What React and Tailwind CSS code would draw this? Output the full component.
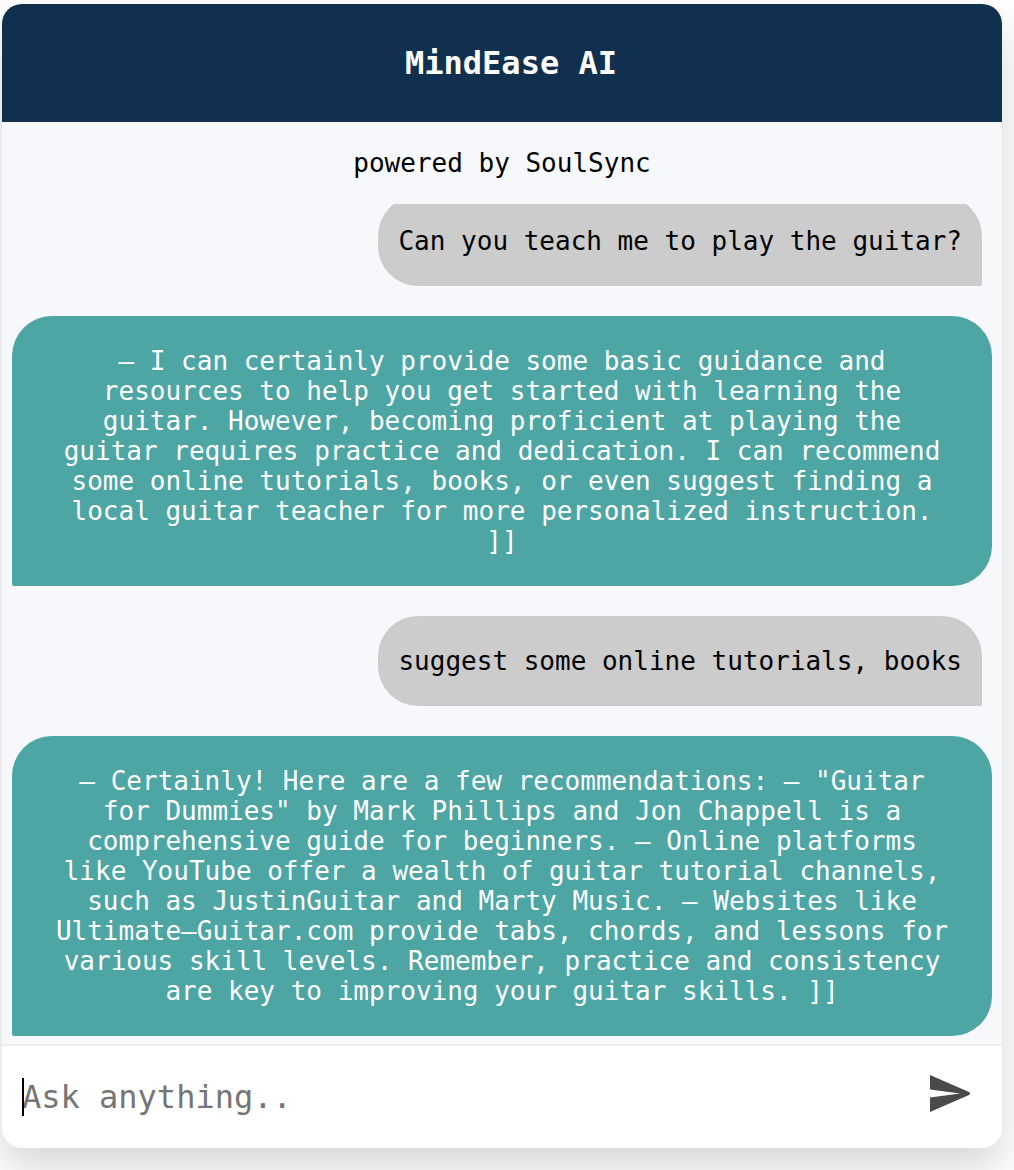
const messages = [
  { from: "user", text: "Can you teach me to play the guitar?" },
  {
    from: "bot",
    text: "– I can certainly provide some basic guidance and resources to help you get started with learning the guitar. However, becoming proficient at playing the guitar requires practice and dedication. I can recommend some online tutorials, books, or even suggest finding a local guitar teacher for more personalized instruction. ]]",
  },
  { from: "user", text: "suggest some online tutorials, books" },
  {
    from: "bot",
    text: '– Certainly! Here are a few recommendations: – "Guitar for Dummies" by Mark Phillips and Jon Chappell is a comprehensive guide for beginners. – Online platforms like YouTube offer a wealth of guitar tutorial channels, such as JustinGuitar and Marty Music. – Websites like Ultimate–Guitar.com provide tabs, chords, and lessons for various skill levels. Remember, practice and consistency are key to improving your guitar skills. ]]',
  },
];

function Message({ from, text }) {
  if (from === "user") {
    return (
      <p className="mr-2.5 self-end rounded-[40px] rounded-br-[2px] bg-[#cccccc] px-5 py-[30px] text-black">
        {text}
      </p>
    );
  }
  return (
    <p className="rounded-[40px] rounded-bl-[2px] bg-[#4da6a4] px-10 py-[30px] text-center text-white">
      {text}
    </p>
  );
}

export default function App() {
  return (
    <div className="overflow-hidden bg-white pt-1 pr-3 pb-[22px] pl-0.5 font-['DejaVu_Sans_Mono',monospace] text-[26px] leading-[30px]">
      <main className="overflow-hidden rounded-[20px] bg-white shadow-[0_20px_40px_rgba(0,0,0,0.16)]">
        <header className="bg-[#112f4e] py-10 pl-[18px] text-center text-white">
          <h1 className="text-[32px] leading-[38px] font-bold">MindEase AI</h1>
        </header>
        <section className="bg-[#f7f8fc]">
          <p className="pt-[26px] pb-[26px] text-center text-black">powered by SoulSync</p>
          <div className="overflow-hidden px-2.5 pb-2">
            <div className="-mt-2 flex flex-col gap-[30px]">
              {messages.map((m) => (
                <Message key={m.text} from={m.from} text={m.text} />
              ))}
            </div>
          </div>
        </section>
        <form
          className="flex items-start border-t-2 border-[#eeeeee] py-8 pr-8 pl-5"
          onSubmit={(e) => e.preventDefault()}
        >
          <div className="relative flex-1">
            <input
              type="text"
              aria-label="Ask anything"
              placeholder="Ask anything.."
              className="block h-[38px] w-full bg-transparent text-[32px] leading-[38px] text-black outline-none placeholder:text-[#757575]"
            />
            <span aria-hidden="true" className="absolute top-0 left-0 h-[38px] w-0.5 bg-black" />
          </div>
          <button type="submit" aria-label="Send" className="-mt-[3px] text-[#4a4a4a]">
            <svg viewBox="0 0 40 37" className="h-[37px] w-10" fill="currentColor">
              <path d="M0 0L39 17Q40 17.5 40 18.5Q40 19.5 39 20L0 37V22.5L30 18.5L0 14.5Z" />
            </svg>
          </button>
        </form>
      </main>
    </div>
  );
}
